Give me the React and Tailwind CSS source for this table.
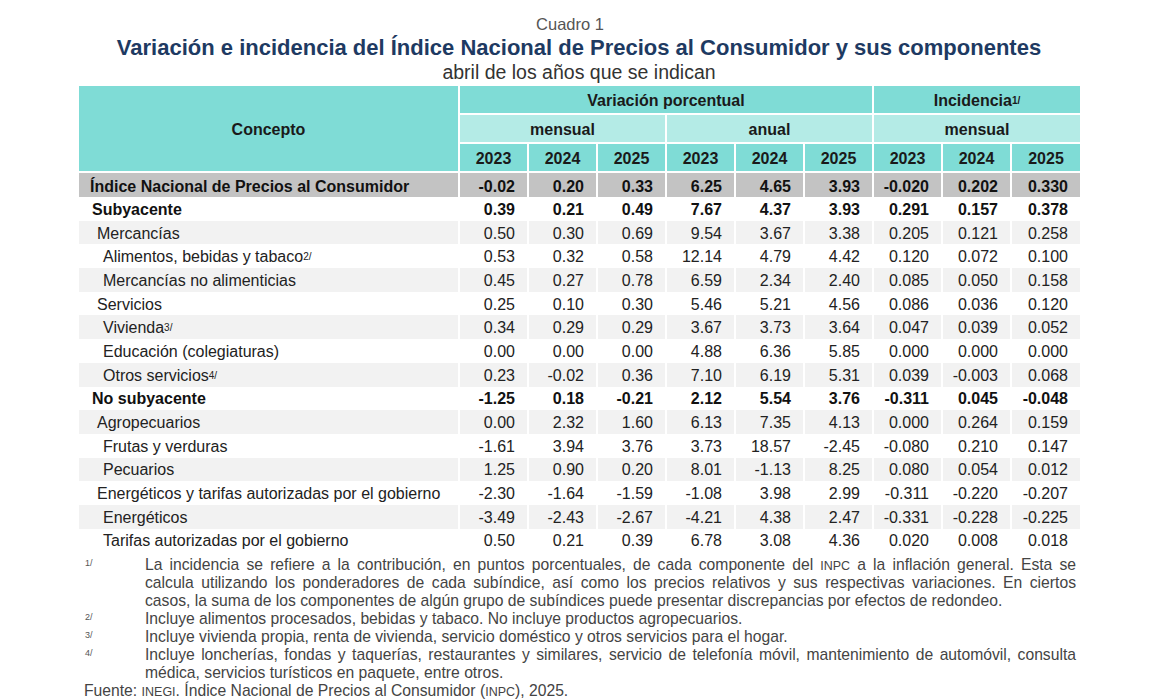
import React from 'react'

const years = ['2023', '2024', '2025']

// [label, indent level, bold, values, superscript]
const rows = [
  ['Subyacente', 0, true, ['0.39', '0.21', '0.49', '7.67', '4.37', '3.93', '0.291', '0.157', '0.378']],
  ['Mercancías', 1, false, ['0.50', '0.30', '0.69', '9.54', '3.67', '3.38', '0.205', '0.121', '0.258']],
  ['Alimentos, bebidas y tabaco', 2, false, ['0.53', '0.32', '0.58', '12.14', '4.79', '4.42', '0.120', '0.072', '0.100'], '2/'],
  ['Mercancías no alimenticias', 2, false, ['0.45', '0.27', '0.78', '6.59', '2.34', '2.40', '0.085', '0.050', '0.158']],
  ['Servicios', 1, false, ['0.25', '0.10', '0.30', '5.46', '5.21', '4.56', '0.086', '0.036', '0.120']],
  ['Vivienda', 2, false, ['0.34', '0.29', '0.29', '3.67', '3.73', '3.64', '0.047', '0.039', '0.052'], '3/'],
  ['Educación (colegiaturas)', 2, false, ['0.00', '0.00', '0.00', '4.88', '6.36', '5.85', '0.000', '0.000', '0.000']],
  ['Otros servicios', 2, false, ['0.23', '-0.02', '0.36', '7.10', '6.19', '5.31', '0.039', '-0.003', '0.068'], '4/'],
  ['No subyacente', 0, true, ['-1.25', '0.18', '-0.21', '2.12', '5.54', '3.76', '-0.311', '0.045', '-0.048']],
  ['Agropecuarios', 1, false, ['0.00', '2.32', '1.60', '6.13', '7.35', '4.13', '0.000', '0.264', '0.159']],
  ['Frutas y verduras', 2, false, ['-1.61', '3.94', '3.76', '3.73', '18.57', '-2.45', '-0.080', '0.210', '0.147']],
  ['Pecuarios', 2, false, ['1.25', '0.90', '0.20', '8.01', '-1.13', '8.25', '0.080', '0.054', '0.012']],
  ['Energéticos y tarifas autorizadas por el gobierno', 1, false, ['-2.30', '-1.64', '-1.59', '-1.08', '3.98', '2.99', '-0.311', '-0.220', '-0.207']],
  ['Energéticos', 2, false, ['-3.49', '-2.43', '-2.67', '-4.21', '4.38', '2.47', '-0.331', '-0.228', '-0.225']],
  ['Tarifas autorizadas por el gobierno', 2, false, ['0.50', '0.21', '0.39', '6.78', '3.08', '4.36', '0.020', '0.008', '0.018']],
]

const inpc = ['-0.02', '0.20', '0.33', '6.25', '4.65', '3.93', '-0.020', '0.202', '0.330']

const indents = ['pl-[13px]', 'pl-[18px]', 'pl-[24px]']

// small-caps style acronyms (INPC, INEGI)
const Sc = ({ children }) => <span className="text-[12.5px] leading-none">{children}</span>

function Note({ mark, children }) {
  return (
    <div className="flex">
      <div className="w-[66px] shrink-0 pl-[6px] text-[9px] text-[#555] leading-[14px]">{mark}</div>
      <div className="flex-1 text-justify">{children}</div>
    </div>
  )
}

export default function App() {
  return (
    <div className="w-[1170px] h-[700px] bg-white overflow-hidden text-[#222]" style={{ fontFamily: '"Liberation Sans", Arial, sans-serif' }}>
      <div className="ml-[79px] w-[1000px] pt-[14px] text-center">
        <div className="pr-[18px] text-[16.5px] leading-[21px] text-[#555]">Cuadro 1</div>
        <div className="text-[22px] leading-[26px] font-bold text-[#1e3a62] whitespace-nowrap">
          Variación e incidencia del Índice Nacional de Precios al Consumidor y sus componentes
        </div>
        <div className="text-[19.5px] leading-[22px] text-[#333]">abril de los años que se indican</div>
      </div>

      <table className="ml-[79px] mt-[3px] table-fixed border-collapse text-[16px] leading-none">
        <colgroup>
          <col className="w-[380px]" />
          {Array.from({ length: 9 }, (_, i) => <col key={i} className="w-[69px]" />)}
        </colgroup>
        <thead className="font-bold text-[#1a1a1a]">
          <tr className="h-[28px]">
            <th rowSpan={3} className="pt-[2px] bg-[#7fdcd6] border-2 border-white border-t-0 border-l-0">Concepto</th>
            <th colSpan={6} className="pt-[2px] bg-[#7fdcd6] border-2 border-white border-t-0">Variación porcentual</th>
            <th colSpan={3} className="pt-[2px] bg-[#7fdcd6] border-2 border-white border-t-0 border-r-0">
              Incidencia<sup className="text-[10px] relative -top-[2px]">1/</sup>
            </th>
          </tr>
          <tr className="h-[29px]">
            <th colSpan={3} className="pt-[2px] bg-[#b4ebe6] border-2 border-white">mensual</th>
            <th colSpan={3} className="pt-[2px] bg-[#b4ebe6] border-2 border-white">anual</th>
            <th colSpan={3} className="pt-[2px] bg-[#b4ebe6] border-2 border-white border-r-0">mensual</th>
          </tr>
          <tr className="h-[29px]">
            {[...years, ...years, ...years].map((y, i) => (
              <th key={i} className={`pt-[2px] bg-[#7fdcd6] border-2 border-white ${i === 8 ? 'border-r-0' : ''}`}>{y}</th>
            ))}
          </tr>
        </thead>
        <tbody>
          <tr className="h-[25px] bg-[#c3c3c3] font-bold text-[#111]">
            <td className="pt-[3px] pl-[11px] border-x-2 border-white border-l-0 whitespace-nowrap">Índice Nacional de Precios al Consumidor</td>
            {inpc.map((v, i) => (
              <td key={i} className={`pt-[3px] text-right pr-[12px] border-x-2 border-white ${i === 8 ? 'border-r-0' : ''}`}>{v}</td>
            ))}
          </tr>
          {rows.map(([label, level, bold, values, sup], r) => (
            <tr key={label} className={`h-[23.7px] ${r % 2 === 1 ? 'bg-[#f2f2f2]' : 'bg-white'} ${bold ? 'font-bold text-[#111]' : ''}`}>
              <td className={`pt-[2px] ${indents[level]} border-x-2 border-white border-l-0 whitespace-nowrap`}>
                {label}
                {sup && <sup className="text-[10px] relative -top-[2px]">{sup}</sup>}
              </td>
              {values.map((v, i) => (
                <td key={i} className={`pt-[2px] text-right pr-[12px] border-x-2 border-white ${i === 8 ? 'border-r-0' : ''}`}>{v}</td>
              ))}
            </tr>
          ))}
        </tbody>
      </table>

      <div className="ml-[79px] w-[997px] mt-[4px] text-[15.7px] leading-[18px] text-[#444]">
        <Note mark="1/">
          <div className="[text-align-last:justify]">
            La incidencia se refiere a la contribución, en puntos porcentuales, de cada componente del <Sc>INPC</Sc> a la inflación general. Esta se
          </div>
          <div className="[text-align-last:justify]">
            calcula utilizando los ponderadores de cada subíndice, así como los precios relativos y sus respectivas variaciones. En ciertos
          </div>
          <div>
            casos, la suma de los componentes de algún grupo de subíndices puede presentar discrepancias por efectos de redondeo.
          </div>
        </Note>
        <Note mark="2/">Incluye alimentos procesados, bebidas y tabaco. No incluye productos agropecuarios.</Note>
        <Note mark="3/">Incluye vivienda propia, renta de vivienda, servicio doméstico y otros servicios para el hogar.</Note>
        <Note mark="4/">
          Incluye loncherías, fondas y taquerías, restaurantes y similares, servicio de telefonía móvil, mantenimiento de automóvil, consulta médica, servicios turísticos en paquete, entre otros.
        </Note>
        <div className="pl-[5px]">
          Fuente: <Sc>INEGI</Sc>. Índice Nacional de Precios al Consumidor (<Sc>INPC</Sc>), 2025.
        </div>
      </div>
    </div>
  )
}
